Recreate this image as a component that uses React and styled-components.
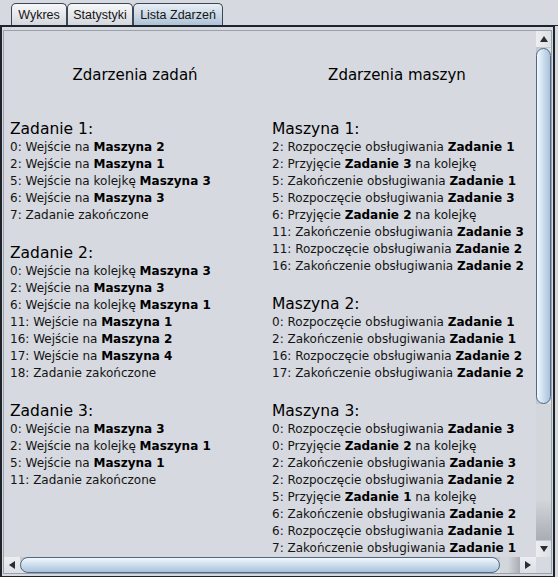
import React from "react";
import styled, { createGlobalStyle } from "styled-components";

const GlobalStyle = createGlobalStyle`
  html, body {
    margin: 0;
    padding: 0;
    background: #d6d9df;
  }
  body {
    width: 558px;
    height: 577px;
    overflow: hidden;
    font-family: "DejaVu Sans", "Liberation Sans", sans-serif;
    color: #111;
  }
`;

const jobEvents = [
  {
    title: "Zadanie 1:",
    items: [
      ["0: Wejście na ", "Maszyna 2"],
      ["2: Wejście na ", "Maszyna 1"],
      ["5: Wejście na kolejkę ", "Maszyna 3"],
      ["6: Wejście na ", "Maszyna 3"],
      ["7: Zadanie zakończone"],
    ],
  },
  {
    title: "Zadanie 2:",
    items: [
      ["0: Wejście na kolejkę ", "Maszyna 3"],
      ["2: Wejście na ", "Maszyna 3"],
      ["6: Wejście na kolejkę ", "Maszyna 1"],
      ["11: Wejście na ", "Maszyna 1"],
      ["16: Wejście na ", "Maszyna 2"],
      ["17: Wejście na ", "Maszyna 4"],
      ["18: Zadanie zakończone"],
    ],
  },
  {
    title: "Zadanie 3:",
    items: [
      ["0: Wejście na ", "Maszyna 3"],
      ["2: Wejście na kolejkę ", "Maszyna 1"],
      ["5: Wejście na ", "Maszyna 1"],
      ["11: Zadanie zakończone"],
    ],
  },
];

const machineEvents = [
  {
    title: "Maszyna 1:",
    items: [
      ["2: Rozpoczęcie obsługiwania ", "Zadanie 1"],
      ["2: Przyjęcie ", "Zadanie 3", " na kolejkę"],
      ["5: Zakończenie obsługiwania ", "Zadanie 1"],
      ["5: Rozpoczęcie obsługiwania ", "Zadanie 3"],
      ["6: Przyjęcie ", "Zadanie 2", " na kolejkę"],
      ["11: Zakończenie obsługiwania ", "Zadanie 3"],
      ["11: Rozpoczęcie obsługiwania ", "Zadanie 2"],
      ["16: Zakończenie obsługiwania ", "Zadanie 2"],
    ],
  },
  {
    title: "Maszyna 2:",
    items: [
      ["0: Rozpoczęcie obsługiwania ", "Zadanie 1"],
      ["2: Zakończenie obsługiwania ", "Zadanie 1"],
      ["16: Rozpoczęcie obsługiwania ", "Zadanie 2"],
      ["17: Zakończenie obsługiwania ", "Zadanie 2"],
    ],
  },
  {
    title: "Maszyna 3:",
    items: [
      ["0: Rozpoczęcie obsługiwania ", "Zadanie 3"],
      ["0: Przyjęcie ", "Zadanie 2", " na kolejkę"],
      ["2: Zakończenie obsługiwania ", "Zadanie 3"],
      ["2: Rozpoczęcie obsługiwania ", "Zadanie 2"],
      ["5: Przyjęcie ", "Zadanie 1", " na kolejkę"],
      ["6: Zakończenie obsługiwania ", "Zadanie 2"],
      ["6: Rozpoczęcie obsługiwania ", "Zadanie 1"],
      ["7: Zakończenie obsługiwania ", "Zadanie 1"],
    ],
  },
];

const tabs = [
  { label: "Wykres", width: 56 },
  { label: "Statystyki", width: 66 },
  { label: "Lista Zdarzeń", width: 90, active: true },
];

const App = () => {
  return (
    <Window>
      <GlobalStyle />
      <TabBar>
        {tabs.map((t) => (
          <Tab key={t.label} $w={t.width} $active={t.active}>
            {t.label}
          </Tab>
        ))}
      </TabBar>
      <TabRule />
      <Frame>
        <ScrollPane>
          <Viewport>
            <Content>
              <Column>
                <ColumnTitle>Zdarzenia zadań</ColumnTitle>
                {jobEvents.map((s) => (
                  <EventSection key={s.title} data={s} />
                ))}
              </Column>
              <Column>
                <ColumnTitle>Zdarzenia maszyn</ColumnTitle>
                {machineEvents.map((s) => (
                  <EventSection key={s.title} data={s} />
                ))}
              </Column>
            </Content>
          </Viewport>
          <VScroll>
            <VButton>
              <ArrowUp />
            </VButton>
            <VThumb />
            <VTrack />
            <VButton>
              <ArrowDown />
            </VButton>
          </VScroll>
          <HScroll>
            <HButton>
              <ArrowLeft />
            </HButton>
            <HThumb />
            <HTrack />
            <HButton>
              <ArrowRight />
            </HButton>
          </HScroll>
          <Corner />
        </ScrollPane>
      </Frame>
    </Window>
  );
};

const EventSection = ({ data }) => (
  <Section>
    <SectionTitle>{data.title}</SectionTitle>
    {data.items.map((it, i) => (
      <Item key={i}>
        {it[0]}
        {it[1] && <b>{it[1]}</b>}
        {it[2]}
      </Item>
    ))}
  </Section>
);

export default App;

const Window = styled.div`
  width: 558px;
  height: 577px;
  display: flex;
  flex-direction: column;
  background: #d6d9df;
`;

const TabBar = styled.div`
  display: flex;
  align-items: flex-end;
  height: 25px;
  box-sizing: border-box;
  padding: 3px 0 0 11px;
`;

const Tab = styled.div`
  width: ${(p) => p.$w}px;
  height: 22px;
  box-sizing: border-box;
  display: flex;
  align-items: center;
  justify-content: center;
  padding-top: 1px;
  border: 1px solid #3d4654;
  border-bottom: none;
  border-radius: 5px 5px 0 0;
  font: 12.5px "Liberation Sans", Arial, sans-serif;
  color: #151515;
  background: ${(p) =>
    p.$active
      ? "linear-gradient(#e8eef5, #c9d7e5 55%, #aec2d6)"
      : "linear-gradient(#f6f7f8, #e4e6ea 55%, #d3d6dc)"};
`;

const TabRule = styled.div`
  height: 3px;
  box-sizing: border-box;
  border-top: 1px solid #1d2530;
  background: #c4d3e3;
`;

const Frame = styled.div`
  flex: 1;
  display: flex;
  margin: 0 3px 3px 0;
  padding: 3px 1px 2px 1px;
  border: 2px solid #1d2328;
  border-top-width: 1px;
`;

const ScrollPane = styled.div`
  flex: 1;
  display: grid;
  grid-template-columns: 1fr 15px;
  grid-template-rows: 1fr 16px;
  border: 1px solid #9ba1a9;
  min-height: 0;
`;

const Viewport = styled.div`
  overflow: hidden;
  position: relative;
  min-height: 0;
`;

const Content = styled.div`
  width: 554px;
  display: grid;
  grid-template-columns: 262px 262px;
  padding-top: 33px;
`;

const Column = styled.div`
  display: flex;
  flex-direction: column;
`;

const ColumnTitle = styled.div`
  text-align: center;
  font-size: 15px;
  line-height: 22px;
  margin-bottom: 14px;
  color: #000;
`;

const Section = styled.div`
  margin-top: 17px;
  padding-left: 6px;
  &:first-of-type {
    margin-top: 0;
  }
`;

const SectionTitle = styled.div`
  font-size: 15.5px;
  line-height: 22px;
  padding-top: 1px;
  margin-bottom: -1px;
  color: #000;
`;

const Item = styled.div`
  font-size: 12px;
  line-height: 17px;
  white-space: nowrap;
  color: #141414;
  b {
    font-weight: bold;
    color: #000;
  }
`;

const VScroll = styled.div`
  display: flex;
  flex-direction: column;
  background: linear-gradient(to right, #c2c6cd, #dfe2e6);
  min-height: 0;
`;

const HScroll = styled.div`
  display: flex;
  background: linear-gradient(#c2c6cd, #dfe2e6);
`;

const Corner = styled.div`
  background: #d6d9df;
`;

const VButton = styled.div`
  height: 16px;
  flex: none;
  display: flex;
  align-items: center;
  justify-content: center;
  background: linear-gradient(to right, #eceef1, #dcdfe4);
  border-bottom: 1px solid #c4c8ce;
  &:last-child {
    border-bottom: none;
    border-top: 1px solid #c4c8ce;
  }
`;

const HButton = styled.div`
  width: 16px;
  flex: none;
  display: flex;
  align-items: center;
  justify-content: center;
  background: linear-gradient(#eceef1, #dcdfe4);
`;

const VThumb = styled.div`
  height: 356px;
  flex: none;
  box-sizing: border-box;
  border: 1px solid #4f6885;
  border-radius: 8px;
  background: linear-gradient(to right, #f4f8fc, #cfe0ef 45%, #a9c2db);
`;

const VTrack = styled.div`
  flex: 1;
  background: linear-gradient(#d3d6db 70%, #a9adb4);
`;

const HThumb = styled.div`
  width: 480px;
  flex: none;
  box-sizing: border-box;
  border: 1px solid #4f6885;
  border-radius: 8px;
  background: linear-gradient(#f4f8fc, #cfe0ef 45%, #a9c2db);
`;

const HTrack = styled.div`
  flex: 1;
  background: linear-gradient(to right, #d3d6db 40%, #a9adb4);
`;

const ArrowUp = styled.span`
  width: 0;
  height: 0;
  border-left: 4px solid transparent;
  border-right: 4px solid transparent;
  border-bottom: 6px solid #2a2d33;
`;

const ArrowDown = styled.span`
  width: 0;
  height: 0;
  border-left: 4px solid transparent;
  border-right: 4px solid transparent;
  border-top: 6px solid #2a2d33;
`;

const ArrowLeft = styled.span`
  width: 0;
  height: 0;
  border-top: 4px solid transparent;
  border-bottom: 4px solid transparent;
  border-right: 6px solid #2a2d33;
`;

const ArrowRight = styled.span`
  width: 0;
  height: 0;
  border-top: 4px solid transparent;
  border-bottom: 4px solid transparent;
  border-left: 6px solid #2a2d33;
`;
